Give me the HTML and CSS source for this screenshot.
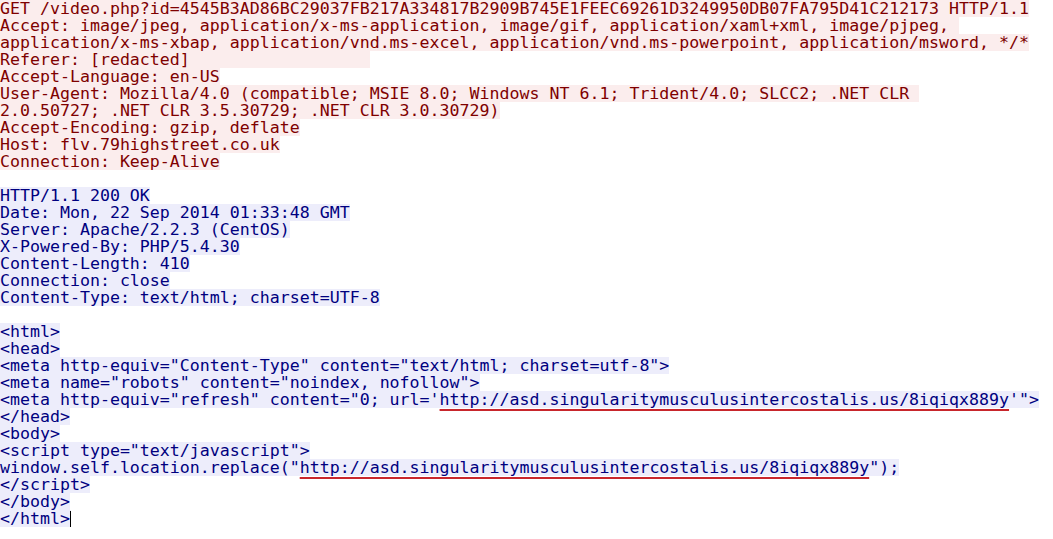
FILE: index.html
```html
<!DOCTYPE html>
<html lang="en">
<head>
  <meta charset="UTF-8" />
  <meta name="viewport" content="width=device-width, initial-scale=1.0"/>
  <title>Follow TCP Stream</title>
  <link rel="stylesheet" href="styles.css">
</head>
<body>
  <div class="stream">
    <!-- client request -->
    <div class="ln req">GET /video.php?id=4545B3AD86BC29037FB217A334817B2909B745E1FEEC69261D3249950DB07FA795D41C212173 HTTP/1.1</div>
    <div class="ln req">Accept: image/jpeg, application/x-ms-application, image/gif, application/xaml+xml, image/pjpeg, </div>
    <div class="ln req">application/x-ms-xbap, application/vnd.ms-excel, application/vnd.ms-powerpoint, application/msword, */*</div>
    <div class="ln req redacted">Referer: [redacted]</div>
    <div class="ln req">Accept-Language: en-US</div>
    <div class="ln req">User-Agent: Mozilla/4.0 (compatible; MSIE 8.0; Windows NT 6.1; Trident/4.0; SLCC2; .NET CLR </div>
    <div class="ln req">2.0.50727; .NET CLR 3.5.30729; .NET CLR 3.0.30729)</div>
    <div class="ln req">Accept-Encoding: gzip, deflate</div>
    <div class="ln req">Host: flv.79highstreet.co.uk</div>
    <div class="ln req">Connection: Keep-Alive</div>
    <div class="ln blank"></div>

    <!-- server response -->
    <div class="ln resp">HTTP/1.1 200 OK</div>
    <div class="ln resp">Date: Mon, 22 Sep 2014 01:33:48 GMT</div>
    <div class="ln resp">Server: Apache/2.2.3 (CentOS)</div>
    <div class="ln resp">X-Powered-By: PHP/5.4.30</div>
    <div class="ln resp">Content-Length: 410</div>
    <div class="ln resp">Connection: close</div>
    <div class="ln resp">Content-Type: text/html; charset=UTF-8</div>
    <div class="ln blank"></div>
    <div class="ln resp">&lt;html&gt;</div>
    <div class="ln resp">&lt;head&gt;</div>
    <div class="ln resp">&lt;meta http-equiv="Content-Type" content="text/html; charset=utf-8"&gt;</div>
    <div class="ln resp">&lt;meta name="robots" content="noindex, nofollow"&gt;</div>
    <div class="ln resp">&lt;meta http-equiv="refresh" content="0; url='<span class="mark">http://asd.singularitymusculusintercostalis.us/8iqiqx889y</span>'"&gt;</div>
    <div class="ln resp">&lt;/head&gt;</div>
    <div class="ln resp">&lt;body&gt;</div>
    <div class="ln resp">&lt;script type="text/javascript"&gt;</div>
    <div class="ln resp">window.self.location.replace("<span class="mark">http://asd.singularitymusculusintercostalis.us/8iqiqx889y</span>");</div>
    <div class="ln resp">&lt;/script&gt;</div>
    <div class="ln resp">&lt;/body&gt;</div>
    <div class="ln resp">&lt;/html&gt;<span class="caret"></span></div>
  </div>
</body>
</html>
```

FILE: styles.css
```css
body {
  margin: 0;
  background: #ffffff;
}

.stream {
  font-family: "DejaVu Sans Mono", monospace;
  font-size: 16.6px;
  line-height: 17px;
}

.ln {
  width: fit-content;
  height: 17px;
  white-space: pre;
}

.req {
  color: #7f0000;
  background-color: #fbeded;
}

.resp {
  color: #00007f;
  background-color: #ededfb;
}

.redacted {
  width: 370px;
}

.mark {
  text-decoration: underline;
  text-decoration-color: #c8262c;
  text-decoration-thickness: 2px;
  text-underline-offset: 3.5px;
  text-decoration-skip-ink: none;
}

.caret {
  display: inline-block;
  width: 1px;
  height: 16px;
  vertical-align: -3px;
  background: #000000;
}
```
